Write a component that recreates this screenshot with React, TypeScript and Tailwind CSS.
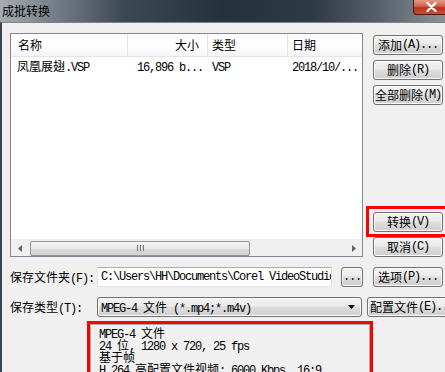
import clsx from 'clsx';

const cjkFont = "font-['Noto_Sans_CJK_SC','Microsoft_YaHei',sans-serif]";

// mixed text: CJK runs at 12px, ascii in a narrow mono (6px per char)
function Txt({ s }: { s: string }) {
  const parts = s.split(/([\u2E80-\u9FFF]+)/);
  return (
    <>
      {parts.map((p, i) =>
        i % 2 === 1 ? (
          <span key={i} className="text-[12px] leading-[12px] font-['Noto_Sans_CJK_SC',sans-serif]">
            {p}
          </span>
        ) : (
          <span key={i} className="text-[12px] leading-[12px] tracking-[-1.2px] font-['Liberation_Mono',monospace]">
            {p}
          </span>
        )
      )}
    </>
  );
}

function Btn({ label, className }: { label: string; className?: string }) {
  return (
    <div
      className={clsx(
        'h-[20px] shrink-0 flex items-center justify-center rounded-[3px] border border-[#707070] text-black leading-[12px] whitespace-pre shadow-[inset_0_0_0_1px_#fbfbfb] bg-[linear-gradient(#f2f2f2_0%,#ebebeb_45%,#dddddd_50%,#cfcfcf_100%)]',
        className
      )}
    >
      <Txt s={label} />
    </div>
  );
}

const infoLines = ['MPEG-4 文件', '24 位, 1280 x 720, 25 fps', '基于帧', 'H.264 高配置文件视频: 6000 Kbps, 16:9'];

export default function App() {
  return (
    <div className="w-[445px] h-[372px] overflow-hidden relative bg-[#f0f0f0] select-none">
      {/* Title bar */}
      <div className="h-[22px] flex items-center relative bg-[linear-gradient(90deg,#a7acb1_0%,#7d868f_10%,#3d4855_28%,#26313e_50%,#2e3946_70%,#56606b_85%,#8a9199_100%)]">
        <span className={clsx('pl-[2px] text-[12px] leading-none text-black', cjkFont)}>成批转换</span>
        <div className="absolute right-0 top-0 w-[32px] h-[15px] rounded-bl-[4px] border border-t-0 border-r-0 border-[#4a1a12] bg-[linear-gradient(#e59a88_0%,#d0604a_45%,#b8331f_55%,#c8503a_100%)] flex items-center justify-center">
          <svg width="11" height="10" viewBox="0 0 11 10" className="ml-[4px]">
            <path d="M1.5 1 L9.5 9 M9.5 1 L1.5 9" stroke="#fff" strokeWidth="2.4" strokeLinecap="round" />
          </svg>
        </div>
      </div>

      {/* Client area */}
      <div className="h-[350px] border-l-2 border-t border-l-[#3b4550] border-t-[#7c838b] pl-[8px] flex flex-col">
        <div className="flex gap-[10px] pt-[10px]">
          {/* File list */}
          <div className="w-[353px] h-[224px] border border-[#828790] bg-white flex flex-col leading-[12px] text-black">
            <div className="h-[23px] flex border-b border-[#e5e5e5] bg-[linear-gradient(#ffffff_0%,#ffffff_50%,#f4f5f7_100%)]">
              <div className={clsx('w-[117px] pl-[7px] flex items-center border-r border-[#e5e5e5] text-[12px]', cjkFont)}>名称</div>
              <div className={clsx('w-[80px] pr-[8px] flex items-center justify-end border-r border-[#e5e5e5] text-[12px]', cjkFont)}>大小</div>
              <div className={clsx('w-[80px] pl-[4px] flex items-center border-r border-[#e5e5e5] text-[12px]', cjkFont)}>类型</div>
              <div className={clsx('flex-1 pl-[4px] flex items-center text-[12px]', cjkFont)}>日期</div>
            </div>
            <div className="h-[18px] flex items-center whitespace-pre">
              <div className="w-[117px] pl-[6px]"><Txt s="凤凰展翅.VSP" /></div>
              <div className="w-[80px] pl-[9px]"><Txt s="16,896 b..." /></div>
              <div className="w-[80px] pl-[4px]"><Txt s="VSP" /></div>
              <div className="flex-1 pl-[4px]"><Txt s="2018/10/..." /></div>
            </div>
            <div className="flex-1" />
            {/* Horizontal scrollbar */}
            <div className="h-[17px] flex items-center bg-[#f0f0f0] border-t border-[#ececec]">
              <div className="w-[17px] flex items-center justify-center">
                <svg width="4" height="7" viewBox="0 0 4 7"><path d="M4 0 L0 3.5 L4 7Z" fill="#606060" /></svg>
              </div>
              <div className="ml-[2px] w-[220px] h-[15px] rounded-[2px] border border-[#979797] bg-[linear-gradient(#f5f5f5_0%,#e9e9e9_50%,#d9d9d9_51%,#d2d2d2_100%)] flex items-center justify-center gap-[2px]">
                <div className="w-px h-[6px] bg-[#707070]" />
                <div className="w-px h-[6px] bg-[#707070]" />
                <div className="w-px h-[6px] bg-[#707070]" />
              </div>
              <div className="flex-1" />
              <div className="w-[17px] flex items-center justify-center">
                <svg width="4" height="7" viewBox="0 0 4 7"><path d="M0 0 L4 3.5 L0 7Z" fill="#606060" /></svg>
              </div>
            </div>
          </div>

          {/* Right buttons */}
          <div className="w-[70px] h-[224px] flex flex-col justify-between pt-[2px]">
            <div className="flex flex-col gap-[5px]">
              <Btn label="添加(A)..." />
              <Btn label="删除(R)" />
              <Btn label="全部删除(M)" />
            </div>
            <div className="flex flex-col gap-[5px]">
              <Btn label="转换(V)" />
              <Btn label="取消(C)" />
            </div>
          </div>
        </div>

        {/* Save folder row */}
        <div className="mt-[10px] h-[20px] flex items-center">
          <div className="w-[87px] shrink-0 whitespace-pre leading-[12px] text-black"><Txt s="保存文件夹(F):" /></div>
          <div className="w-[235px] shrink-0 h-[20px] bg-white border border-[#abadb3] border-b-[#e3e9ef] border-l-[#e2e3ea] border-r-[#dbdfe6] pl-[3px] flex items-center overflow-hidden whitespace-pre leading-[12px]">
            <Txt s="C:\Users\HH\Documents\Corel VideoStudio Pro" />
          </div>
          <Btn label="..." className="ml-[9px] w-[22px]" />
          <Btn label="选项(P)..." className="ml-[10px] w-[70px]" />
        </div>

        {/* Save type row */}
        <div className="mt-[10px] h-[20px] flex items-center">
          <div className="w-[87px] shrink-0 whitespace-pre leading-[12px] text-black"><Txt s="保存类型(T):" /></div>
          <div className="w-[265px] shrink-0 h-[20px] rounded-[3px] border border-[#707070] bg-[linear-gradient(#f2f2f2_0%,#ebebeb_45%,#dddddd_50%,#cfcfcf_100%)] shadow-[inset_0_0_0_1px_#fbfbfb] flex items-center pl-[3px] pr-[6px] whitespace-pre leading-[12px]">
            <div className="flex-1">
              <Txt s="MPEG-4 文件 (*.mp4;*.m4v)" />
            </div>
            <svg width="7" height="4" viewBox="0 0 7 4" className="ml-[5px]"><path d="M0 0 L7 0 L3.5 4Z" fill="#000" /></svg>
          </div>
          <Btn label="配置文件(E)..." className="ml-[5px] w-[90px] border-[#3c7fb1] shadow-[inset_0_0_0_1px_#48d8fb] justify-start pl-[2px]" />
        </div>

        {/* Profile info */}
        <div className="mt-[4px] ml-[77px] w-[286px] flex-1 border-[3px] border-b-0 border-[#ff0000] flex">
          <div className="flex-1 border border-b-0 border-[#a9a9a9] bg-[#f0f0f0] pl-[8px] pt-[1px] text-black whitespace-pre">
            {infoLines.map((l) => (
              <div key={l} className="h-[12px] leading-[12px] overflow-visible">
                <Txt s={l} />
              </div>
            ))}
          </div>
        </div>
      </div>

      {/* Red highlight around convert button */}
      <div className="absolute left-[366px] top-[206px] w-[82px] h-[31px] border-[3px] border-[#ff0000]" />
    </div>
  );
}
